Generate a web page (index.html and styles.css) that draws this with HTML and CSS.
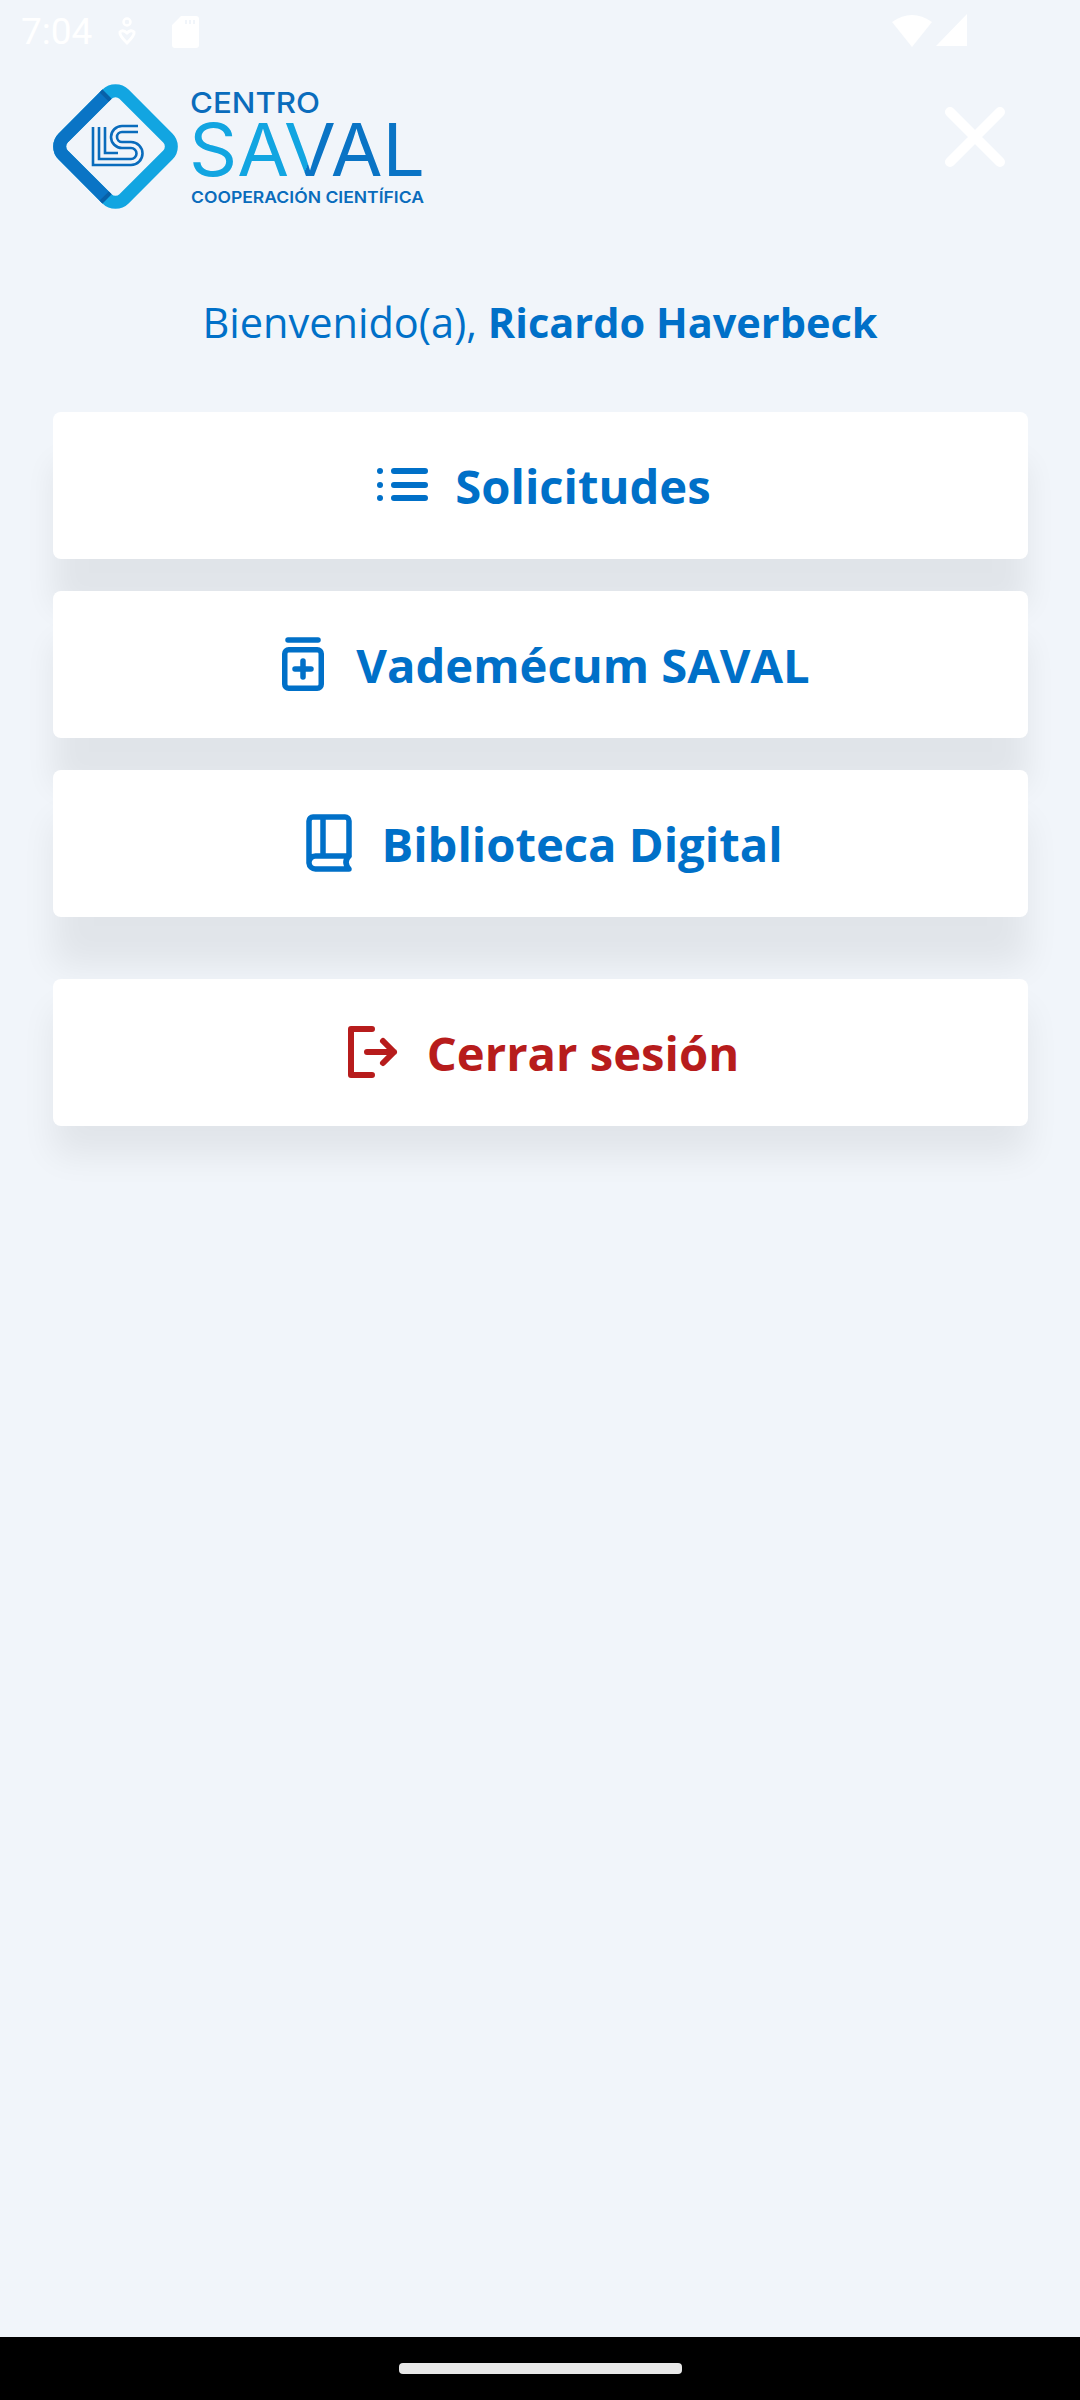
FILE: index.html
```html
<!doctype html>
<html lang="es">
<head>
<meta charset="utf-8">
<title>Centro SAVAL</title>
<link rel="stylesheet" href="styles.css">
</head>
<body>
<div class="status">
	<div class="status-left">
		<span class="time">7:04</span>
		<svg class="st-vpn" width="22" height="30" viewBox="0 0 20 30"><circle cx="10" cy="5" r="3.5" fill="none" stroke="#fff" stroke-width="2.5"/><path d="M3 15 Q6 12 10 16 Q14 12 17 15 Q18 18 10 26 Q2 18 3 15Z" fill="none" stroke="#fff" stroke-width="3"/></svg>
		<svg class="st-sd" width="27" height="32" viewBox="0 0 27 32"><path fill-rule="evenodd" d="M9 0H24a3 3 0 0 1 3 3V29a3 3 0 0 1-3 3H3a3 3 0 0 1-3-3V9ZM13 4V8H15V4ZM17 4V8H19V4ZM21 4V8H23V4Z" fill="#fff"/></svg>
	</div>
	<div class="status-right">
		<svg width="40" height="33" viewBox="0 0 40 33"><path d="M0 8Q20-6 40 8L20 33Z" fill="#fff"/></svg>
		<svg width="31" height="32" viewBox="0 0 31 32"><path d="M31 0V32H0Z" fill="#fff"/></svg>
	</div>
</div>

<div class="top">
	<svg class="logo" width="380" height="130" viewBox="50 80 380 130">
		<defs>
			<linearGradient id="savalfill" gradientUnits="userSpaceOnUse" x1="303" y1="176" x2="355" y2="198">
				<stop offset="0" stop-color="#12a5e1"/>
				<stop offset="0" stop-color="#0a74c5"/>
			</linearGradient>
		</defs>
		<g transform="translate(115.500 146.500) rotate(45)" fill="none" stroke-width="13">
			<rect x="-43" y="-43" width="86" height="86" rx="12" stroke="#12a5e1"/>
			<path d="M-43-31V31A12 12 0 0 0-31 43H31" stroke="#0a74c5"/>
			<path d="M-43-31V-27M31 43H27" stroke="#0860a8"/>
		</g>
		<path d="M93 127V165H131A11.500 11.500 0 0 0 131 142H122A5 5 0 0 1 122 132H138M99 127V159H131A5.500 5.500 0 0 0 131 148H122A11 11 0 0 1 122 126H138M105 127V153H118" fill="none" stroke="#0a6cbc" stroke-width="2.600"/>
		<text class="logo-centro" x="190" y="113" textLength="130" lengthAdjust="spacingAndGlyphs">CENTRO</text>
		<text class="logo-saval" x="189" y="176" textLength="236" lengthAdjust="spacingAndGlyphs" fill="url(#savalfill)">SAVAL</text>
		<text class="logo-coop" x="191" y="203" textLength="233" lengthAdjust="spacingAndGlyphs">COOPERACIÓN CIENTÍFICA</text>
	</svg>
	<svg class="close" width="62" height="62" viewBox="0 0 62 62"><path d="M6 6L56 56M56 6L6 56" stroke="#fff" stroke-width="10" stroke-linecap="round"/></svg>
</div>

<p class="hello">Bienvenido(a), <b>Ricardo Haverbeck</b></p>

<div class="menu">
	<a href="javascript:;" class="item">
		<svg class="ico-list" width="52" height="36" viewBox="0 0 52 36"><g fill="#0070c8"><circle cx="3" cy="4" r="3"/><circle cx="3" cy="18" r="3"/><circle cx="3" cy="31" r="3"/></g><path d="M17 4H48M17 18H48M17 31H48" stroke="#0070c8" stroke-width="6" stroke-linecap="round"/></svg>
		Solicitudes
	</a>
	<a href="javascript:;" class="item">
		<svg class="ico-jar" width="48" height="54" viewBox="0 0 48 54" fill="none" stroke="#0070c8" stroke-width="5.500" stroke-linecap="round"><path d="M6 3H36"/><rect x="2.750" y="12.750" width="36.500" height="38.500" rx="4"/><path d="M21 24V40M13 32H29"/></svg>
		Vademécum SAVAL
	</a>
	<a href="javascript:;" class="item item-lib">
		<svg class="ico-book" width="49" height="58" viewBox="0 0 49 58" fill="none" stroke="#0070c8" stroke-width="5.500" stroke-linecap="round" stroke-linejoin="round"><path d="M43 42V7A4 4 0 0 0 39 3H7A4 4 0 0 0 3 7V49A6.500 6.500 0 0 0 9.500 55H43Q37 48 43 42H9.500A6.500 6.500 0 0 0 3 49M17 3V41"/></svg>
		Biblioteca Digital
	</a>
	<a href="javascript:;" class="item item-out">
		<svg class="ico-out" width="53" height="52" viewBox="0 0 53 52" fill="none" stroke="#b71c1c" stroke-width="6" stroke-linecap="round" stroke-linejoin="round"><path d="M24 3H3V49H24M19 26H46M35 15L46 26L35 37"/></svg>
		Cerrar sesión
	</a>
</div>

<div class="navbar"><span class="pill"></span></div>
</body>
</html>
```

FILE: styles.css
```css
*{margin:0; padding:0; box-sizing:border-box; text-decoration:none;}
body{height:2400px; background:#f1f5fa; font-family:"Open Sans",sans-serif; display:flex; flex-direction:column; overflow:hidden;}

.status{height:62px; padding:14px 113px 0 21px; display:flex; justify-content:space-between; align-items:flex-start; flex:none;}
.status-left{display:flex; align-items:center;}
.status-right{display:flex; gap:4px;}
.time{font:37px/36px Roboto,sans-serif; color:#fff;}
.st-vpn{margin:0 34px 0 24px;}

.top{display:flex; justify-content:space-between; padding:18px 74px 0 50px; flex:none;}
.close{margin-top:26px;}
.logo-centro{font:500 29px Inter,sans-serif; fill:#0a6cbc;}
.logo-saval{font:400 73px Inter,sans-serif;}
.logo-coop{font:600 16px Inter,sans-serif; fill:#0a6cbc;}

.hello{margin-top:83px; text-align:center; font-size:41.500px; line-height:58px; color:#0070c8;}
.hello b{font-weight:700;}

.menu{margin:61px 52px 0 53px; display:flex; flex-direction:column; gap:32.500px;}
.item{height:146.500px; padding-top:2px; background:#fff; border-radius:8px; display:flex; align-items:center; justify-content:center; gap:26px; font-size:47.200px; font-weight:700; color:#0070c8; box-shadow:0 50px 30px rgba(0,0,0,.067);}
.item svg{margin-top:-2px;}
.ico-list{margin-left:7px;}
.ico-jar{margin-left:11px;}
.ico-book{margin-left:8px;}
.ico-out{margin-left:6px;}
.item-lib{box-shadow:0 50px 34px rgba(0,0,0,.067);}
.item-out{margin-top:30px; color:#b71c1c; box-shadow:0 30px 34px rgba(0,0,0,.067);}

.navbar{margin-top:auto; height:63px; background:#000; display:flex; justify-content:center; padding-top:26px; flex:none;}
.pill{width:283px; height:11px; border-radius:4px; background:#e8e8e8;}
```
